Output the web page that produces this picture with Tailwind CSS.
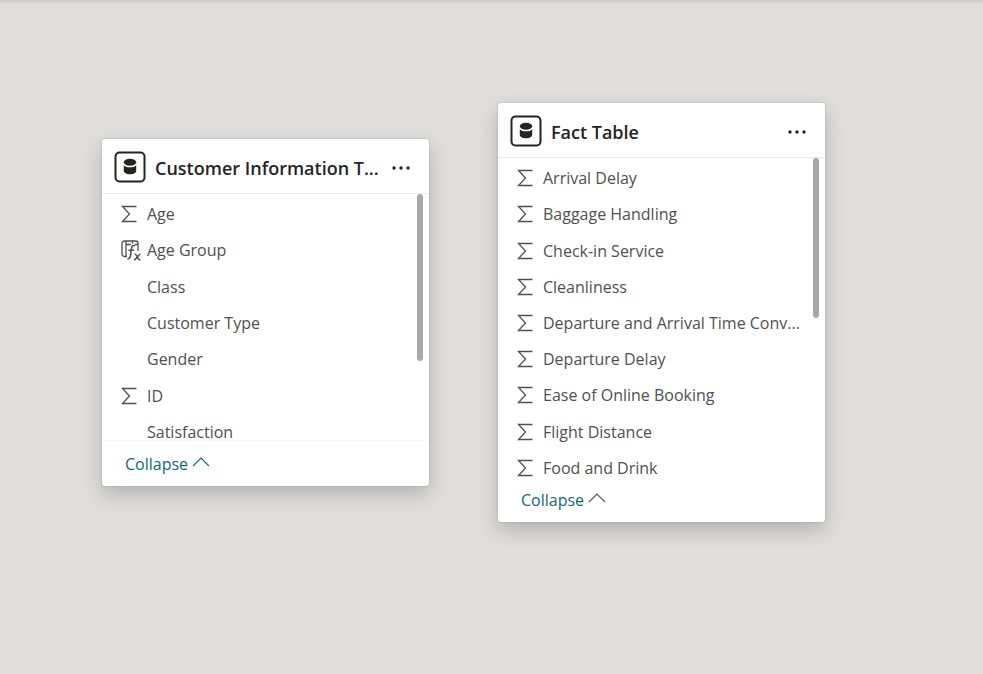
<!DOCTYPE html>
<html lang="en">
<head>
<meta charset="utf-8">
<title>Model view</title>
<script src="https://cdn.jsdelivr.net/npm/@tailwindcss/browser@4"></script>
</head>
<body class="bg-[#dfdedc] font-['Open_Sans','Noto_Sans',sans-serif] text-[#252423]">
<svg class="hidden" aria-hidden="true">
  <symbol id="db" viewBox="0 0 32 32"><rect x="1.5" y="1.5" width="29" height="29" rx="4" fill="none" stroke="currentColor" stroke-width="2"/><ellipse cx="16" cy="11.3" rx="6.2" ry="3.5" fill="currentColor"/><path d="M9.8 14.200c1.500 1.600 3.600 2.100 6.200 2.100s4.700-.5 6.200-2.100v5.600c0 2-2.700 3.500-6.200 3.500s-6.200-1.500-6.200-3.500z" fill="currentColor"/></symbol>
  <symbol id="sigma" viewBox="0 0 16 18"><path d="M15.500 1.500H1.500L8.500 9L1.500 16.500H15.500" fill="none" stroke="currentColor" stroke-width="1.300"/></symbol>
  <symbol id="fx" viewBox="0 0 22 22"><g fill="none" stroke="currentColor" stroke-width="1.300"><path d="M7 17.500H4.500Q2 17.500 2 15V4.500Q2 2 4.500 2H15.500Q18 2 18 4.500V12M6 2V17.500M6 5.500H11M12.500 2V4.500M15 5.500H18"/><path d="M15 6.800C12.500 5.800 11.800 7.200 11.500 9.500L10.500 16.500C10.200 19 9.500 20 7.500 19.800M8.500 11.300H14" stroke-width="1.600"/><path d="M14.500 15C17 14.500 17.500 21.500 20.500 21M20.500 15C18.500 15 16.500 21 14 21" stroke-width="1.500"/></g></symbol>
  <symbol id="dots" viewBox="0 0 20 6"><g fill="currentColor"><circle cx="3" cy="3" r="1.700"/><circle cx="10" cy="3" r="1.700"/><circle cx="17" cy="3" r="1.700"/></g></symbol>
  <symbol id="up" viewBox="0 0 18 10"><path d="M1 9L9 1L17 9" fill="none" stroke="currentColor" stroke-width="1.100"/></symbol>
</svg>
<main class="relative min-h-screen overflow-hidden">
  <div class="h-1 bg-linear-to-b from-[#cbcac8] to-[#dfdedc]"></div>

  <section class="absolute left-[102px] top-[139px] w-[327px] rounded-[3px] bg-white shadow-[0_0_2px_rgba(0,0,0,0.2),0_8px_20px_rgba(0,0,0,0.2)]">
    <header class="flex h-[55px] items-center border-b border-[#ebebeb] pl-3 pr-[18px] pt-[2px]">
      <svg class="size-8 shrink-0"><use href="#db"/></svg>
      <h2 class="ml-[9px] mt-[2px] grow whitespace-nowrap text-lg font-semibold">Customer Information T...</h2>
      <button class="mt-[2px] shrink-0" aria-label="More options"><svg class="h-[6px] w-5"><use href="#dots"/></svg></button>
    </header>
    <div class="relative h-[246px] pt-[2px]">
      <ul class="flex h-[254px] flex-col text-base leading-4 text-[#505050]">
        <li class="flex flex-1 items-center pl-[19px]"><svg class="mr-[10px] h-[18px] w-4"><use href="#sigma"/></svg>Age</li>
        <li class="flex flex-1 items-center pl-[18px]"><svg class="mr-[5px] size-[22px]"><use href="#fx"/></svg>Age Group</li>
        <li class="flex flex-1 items-center pl-[45px]">Class</li>
        <li class="flex flex-1 items-center pl-[45px]">Customer Type</li>
        <li class="flex flex-1 items-center pl-[45px]">Gender</li>
        <li class="flex flex-1 items-center pl-[19px]"><svg class="mr-[10px] h-[18px] w-4"><use href="#sigma"/></svg>ID</li>
        <li class="flex flex-1 items-center pl-[45px]">Satisfaction</li>
      </ul>
      <div class="absolute right-[6px] top-0 h-[167px] w-[6px] rounded-full bg-[#a9a9a9]"></div>
    </div>
    <footer class="h-[46px] border-t border-[#f8f8f8] pl-[23px] pt-[11px]">
      <button class="flex items-center gap-1 text-base text-[#0f6a74]">Collapse<svg class="mb-1 h-[10px] w-[18px]"><use href="#up"/></svg></button>
    </footer>
  </section>

  <section class="absolute left-[498px] top-[103px] w-[327px] rounded-[3px] bg-white shadow-[0_0_2px_rgba(0,0,0,0.2),0_8px_20px_rgba(0,0,0,0.2)]">
    <header class="flex h-[55px] items-center border-b border-[#ebebeb] pl-3 pr-[18px] pt-[2px]">
      <svg class="size-8 shrink-0"><use href="#db"/></svg>
      <h2 class="ml-[9px] mt-[2px] grow whitespace-nowrap text-lg font-semibold">Fact Table</h2>
      <button class="mt-[2px] shrink-0" aria-label="More options"><svg class="h-[6px] w-5"><use href="#dots"/></svg></button>
    </header>
    <div class="relative h-[318px] pt-[2px]">
      <ul class="flex h-[326px] flex-col text-base leading-4 text-[#505050]">
        <li class="flex flex-1 items-center pl-[19px]"><svg class="mr-[10px] h-[18px] w-4"><use href="#sigma"/></svg>Arrival Delay</li>
        <li class="flex flex-1 items-center pl-[19px]"><svg class="mr-[10px] h-[18px] w-4"><use href="#sigma"/></svg>Baggage Handling</li>
        <li class="flex flex-1 items-center pl-[19px]"><svg class="mr-[10px] h-[18px] w-4"><use href="#sigma"/></svg>Check-in Service</li>
        <li class="flex flex-1 items-center pl-[19px]"><svg class="mr-[10px] h-[18px] w-4"><use href="#sigma"/></svg>Cleanliness</li>
        <li class="flex flex-1 items-center whitespace-nowrap pl-[19px]"><svg class="mr-[10px] h-[18px] w-4 shrink-0"><use href="#sigma"/></svg>Departure and Arrival Time Conv...</li>
        <li class="flex flex-1 items-center pl-[19px]"><svg class="mr-[10px] h-[18px] w-4"><use href="#sigma"/></svg>Departure Delay</li>
        <li class="flex flex-1 items-center pl-[19px]"><svg class="mr-[10px] h-[18px] w-4"><use href="#sigma"/></svg>Ease of Online Booking</li>
        <li class="flex flex-1 items-center pl-[19px]"><svg class="mr-[10px] h-[18px] w-4"><use href="#sigma"/></svg>Flight Distance</li>
        <li class="flex flex-1 items-center pl-[19px]"><svg class="mr-[10px] h-[18px] w-4"><use href="#sigma"/></svg>Food and Drink</li>
      </ul>
      <div class="absolute right-[6px] top-0 h-[160px] w-[6px] rounded-full bg-[#a9a9a9]"></div>
    </div>
    <footer class="h-[46px] border-t border-transparent pl-[23px] pt-[11px]">
      <button class="flex items-center gap-1 text-base text-[#0f6a74]">Collapse<svg class="mb-1 h-[10px] w-[18px] text-[#5c5340]"><use href="#up"/></svg></button>
    </footer>
  </section>
</main>
</body>
</html>
